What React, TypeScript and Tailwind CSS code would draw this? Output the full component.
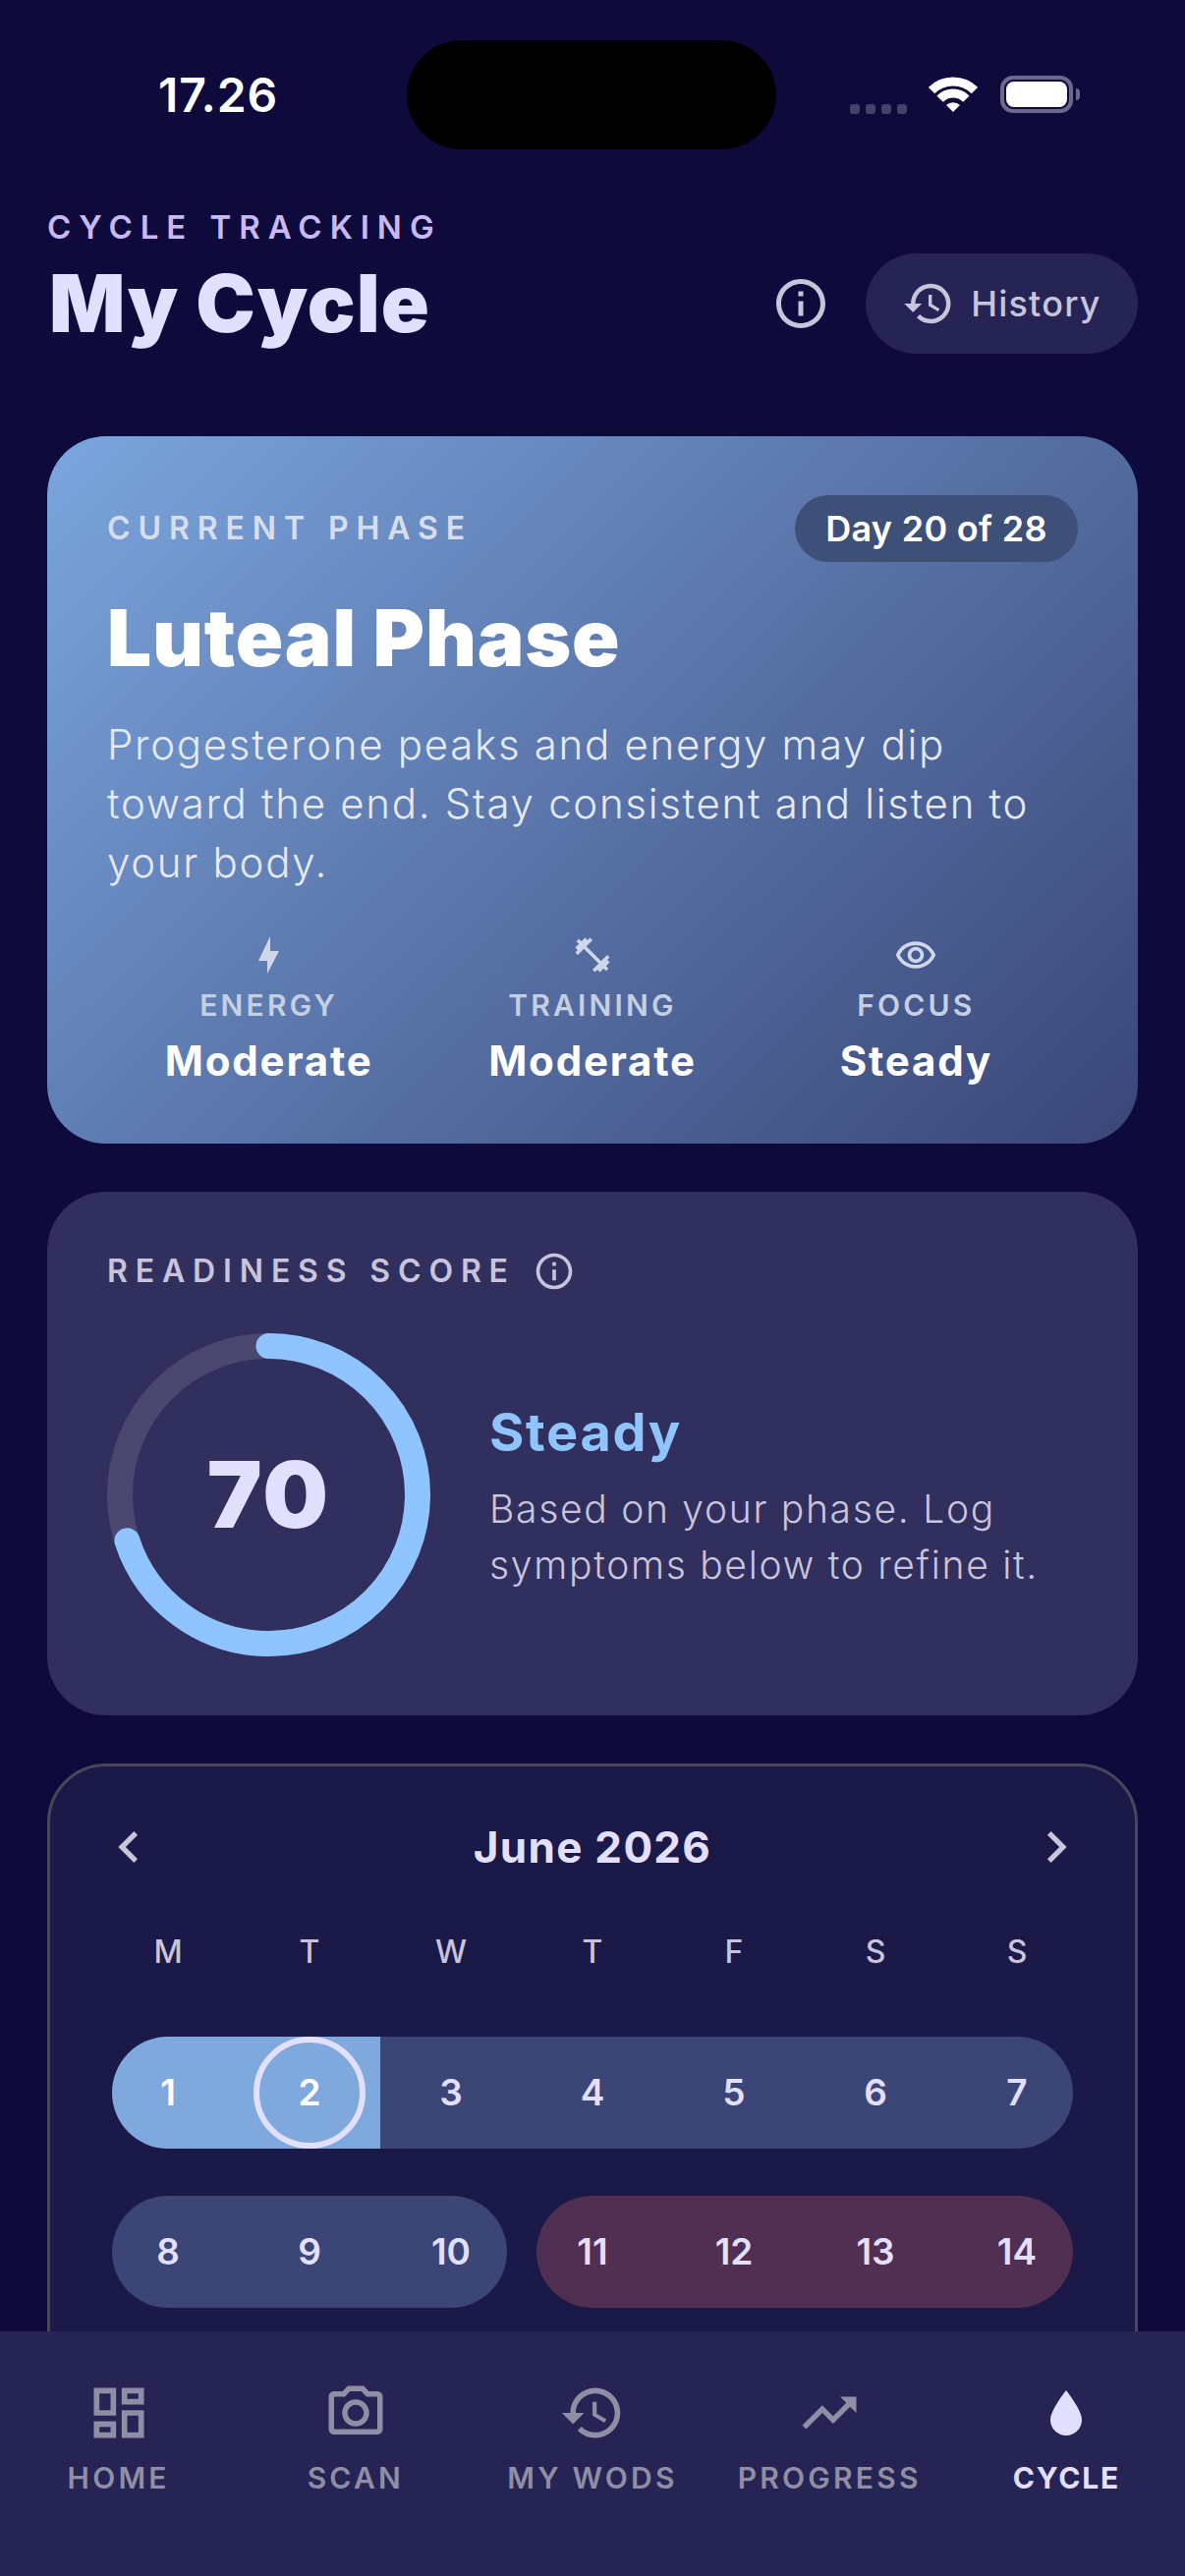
import { FC, ReactNode } from "react";
import {
  MdChevronLeft,
  MdChevronRight,
  MdFitnessCenter,
  MdHistory,
  MdInfoOutline,
  MdOutlineDashboard,
  MdOutlinePhotoCamera,
  MdOutlineRemoveRedEye,
  MdTrendingUp,
} from "react-icons/md";

const BoltIcon = () => (
  <svg width="21" height="38" viewBox="0 0 21 38" fill="currentColor">
    <polygon points="12,0 0,25 9,25 9,38 21,15 12,15" />
  </svg>
);

const DropIcon = () => (
  <svg width="32" height="46" viewBox="0 0 32 46" fill="currentColor">
    <path d="M16 0C16 0 32 20 32 30A16 16 0 0 1 0 30C0 20 16 0 16 0Z" />
  </svg>
);

const WifiIcon = () => (
  <svg width="50" height="36" viewBox="0 0 50 36" fill="none">
    <path d="M3.1 14.1A31 31 0 0 1 46.9 14.1" stroke="white" strokeWidth="9" />
    <path d="M11.6 22.6A19 19 0 0 1 38.4 22.6" stroke="white" strokeWidth="9" />
    <path d="M18 29A10 10 0 0 1 32 29L25 36Z" fill="white" />
  </svg>
);

const StatusBar = () => (
  <div className="flex items-start pt-[41px] h-[152px] shrink-0">
    <div className="w-[414px] pl-[30px] h-[111px] flex items-center justify-center font-semibold text-[48px] text-white tracking-[0.8px]">
      17.26
    </div>
    <div className="w-[376px] h-[111px] rounded-full bg-black"></div>
    <div className="flex-1 flex items-start pl-[75px] pt-[37px]">
      <div className="flex gap-[6px] mt-[28px]">
        <span className="w-[10px] h-[10px] rounded-[3px] bg-[#45436a]"></span>
        <span className="w-[10px] h-[10px] rounded-[3px] bg-[#45436a]"></span>
        <span className="w-[10px] h-[10px] rounded-[3px] bg-[#45436a]"></span>
        <span className="w-[10px] h-[10px] rounded-[3px] bg-[#45436a]"></span>
      </div>
      <div className="ml-[22px]">
        <WifiIcon />
      </div>
      <div className="ml-[23px] w-[74px] h-[38px] rounded-[13px] border-[4px] border-[#6b6990] p-[2px] -mt-[1px]">
        <div className="w-full h-full rounded-[8px] bg-white"></div>
      </div>
      <div className="w-[4px] h-[12px] rounded-r-full bg-[#6b6990] ml-[3px] mt-[12px]"></div>
    </div>
  </div>
);

type StatProps = { icon: ReactNode; label: string; value: string };

const Stat: FC<StatProps> = ({ icon, label, value }) => (
  <div className="flex flex-col items-center">
    <div className="h-[40px] flex items-center justify-center text-[#cfd8ea]">
      {icon}
    </div>
    <div className="mt-[11px] text-[30px] leading-[40px] font-semibold tracking-[3.2px] text-[#c5cfe3]">
      {label}
    </div>
    <div className="mt-[12px] text-[42px] leading-[50px] font-bold text-white tracking-[1.8px]">
      {value}
    </div>
  </div>
);

const PhaseCard = () => (
  <section className="rounded-[60px] bg-linear-135 from-[#7ba6de] to-[#3a4677] px-[61px] pt-[60px] pb-[59px]">
    <div className="flex items-center justify-between h-[68px]">
      <span className="text-[32px] font-semibold tracking-[7.9px] text-[#d6deee]">
        CURRENT PHASE
      </span>
      <span className="h-[68px] w-[288px] rounded-full bg-[#3f5078] flex items-center justify-center text-[36px] font-semibold text-white tracking-[0.3px]">
        Day 20 of 28
      </span>
    </div>
    <h2 className="mt-[32px] text-[80px] leading-[90px] font-black text-white tracking-[0.8px]">
      Luteal Phase
    </h2>
    <p className="mt-[34px] text-[42px] leading-[60px] font-light text-[#e4e9f4] tracking-[1.7px]">
      Progesterone peaks and energy may dip
      <br />
      toward the end. Stay consistent and listen to
      <br />
      your body.
    </p>
    <div className="mt-[44px] grid grid-cols-3">
      <Stat icon={<BoltIcon />} label="ENERGY" value="Moderate" />
      <Stat icon={<MdFitnessCenter size={42} />} label="TRAINING" value="Moderate" />
      <Stat icon={<MdOutlineRemoveRedEye size={44} />} label="FOCUS" value="Steady" />
    </div>
  </section>
);

const ReadinessCard = () => (
  <section className="mt-[49px] rounded-[60px] bg-[#312f5e] px-[61px] pt-[61px] pb-[60px]">
    <div className="flex items-center h-[40px] text-[#c7c4dc]">
      <span className="text-[32px] font-semibold tracking-[7.85px]">
        READINESS SCORE
      </span>
      <MdInfoOutline size={44} className="ml-[17px]" />
    </div>
    <div className="mt-[43px] flex items-center">
      <div className="relative w-[329px] h-[329px] shrink-0">
        <svg width="329" height="329" viewBox="0 0 329 329" fill="none">
          <circle cx="164.5" cy="164.5" r="151.5" stroke="#4a4770" strokeWidth="26" />
          <circle
            cx="164.5"
            cy="164.5"
            r="151.5"
            stroke="#90c4ff"
            strokeWidth="26"
            strokeLinecap="round"
            pathLength={100}
            strokeDasharray="70 100"
            transform="rotate(-90 164.5 164.5)"
          />
        </svg>
        <div className="absolute inset-0 flex items-center justify-center text-[94px] font-black text-[#e2dfff] tracking-[2px]">
          70
        </div>
      </div>
      <div className="ml-[60px]">
        <div className="text-[54px] leading-[70px] font-bold text-[#90c4ff] tracking-[1.7px]">
          Steady
        </div>
        <p className="mt-[14px] text-[39px] leading-[57px] font-light text-[#c7c4dc] tracking-[1.7px]">
          Based on your phase. Log
          <br />
          symptoms below to refine it.
        </p>
      </div>
    </div>
  </section>
);

const WEEKDAYS = ["M", "T", "W", "T", "F", "S", "S"];

const CalendarCard = () => (
  <section className="mt-[49px] rounded-[60px] border-[3px] border-[#47475c] bg-[#1b1947] px-[48px] pt-[50px] pb-[140px]">
    <div className="flex items-center justify-between h-[64px] text-[#c7c4dc]">
      <MdChevronLeft size={64} />
      <span className="text-[44px] font-bold text-[#e2dfff] tracking-[1.3px]">
        June 2026
      </span>
      <MdChevronRight size={64} />
    </div>
    <div className="mt-[55px] grid grid-cols-7 text-center text-[32px] leading-[40px] font-medium text-[#c7c4dc]">
      {WEEKDAYS.map((day, i) => (
        <div key={i}>{day}</div>
      ))}
    </div>
    <div className="mt-[66px] grid grid-cols-7 h-[114px] text-[37px] font-semibold text-[#e2dfff]">
      <div className="ml-[15px] pr-[15px] rounded-l-full bg-[#7fa8dd] text-white flex items-center justify-center">
        1
      </div>
      <div className="bg-[#7fa8dd] text-white flex items-center justify-center">
        <div className="w-[114px] h-[114px] rounded-full border-[6px] border-[#e2dfff] flex items-center justify-center">
          2
        </div>
      </div>
      <div className="bg-[#3b4677] flex items-center justify-center">3</div>
      <div className="bg-[#3b4677] flex items-center justify-center">4</div>
      <div className="bg-[#3b4677] flex items-center justify-center">5</div>
      <div className="bg-[#3b4677] flex items-center justify-center">6</div>
      <div className="mr-[15px] pl-[15px] rounded-r-full bg-[#3b4677] flex items-center justify-center">
        7
      </div>
    </div>
    <div className="mt-[48px] grid grid-cols-7 h-[114px] text-[37px] font-semibold text-[#e2dfff]">
      <div className="ml-[15px] pr-[15px] rounded-l-full bg-[#3b4677] flex items-center justify-center">
        8
      </div>
      <div className="bg-[#3b4677] flex items-center justify-center">9</div>
      <div className="mr-[15px] pl-[15px] rounded-r-full bg-[#3b4677] flex items-center justify-center">
        10
      </div>
      <div className="ml-[15px] pr-[15px] rounded-l-full bg-[#502f53] flex items-center justify-center">
        11
      </div>
      <div className="bg-[#502f53] flex items-center justify-center">12</div>
      <div className="bg-[#502f53] flex items-center justify-center">13</div>
      <div className="mr-[15px] pl-[15px] rounded-r-full bg-[#502f53] flex items-center justify-center">
        14
      </div>
    </div>
  </section>
);

type NavItemProps = { icon: ReactNode; label: string; active?: boolean };

const NavItem: FC<NavItemProps> = ({ icon, label, active }) => (
  <div
    className={`flex flex-col items-center ${
      active ? "text-[#e2dfff]" : "text-[#8f8ea5]"
    }`}
  >
    <div className="h-[66px] flex items-center justify-center">{icon}</div>
    <div
      className={`mt-[13px] text-[30px] leading-[40px] ${
        active ? "font-bold tracking-[1.8px]" : "font-semibold tracking-[3.2px]"
      }`}
    >
      {label}
    </div>
  </div>
);

const BottomNav = () => (
  <nav className="h-[249px] shrink-0 bg-[#252454] grid grid-cols-5 pt-[50px]">
    <NavItem icon={<MdOutlineDashboard size={68} />} label="HOME" />
    <NavItem icon={<MdOutlinePhotoCamera size={66} />} label="SCAN" />
    <NavItem icon={<MdHistory size={68} />} label="MY WODS" />
    <NavItem icon={<MdTrendingUp size={66} />} label="PROGRESS" />
    <NavItem icon={<DropIcon />} label="CYCLE" active />
  </nav>
);

export default function App() {
  return (
    <div className="w-[1206px] h-[2622px] overflow-hidden bg-[#0f0a3c] flex flex-col font-['Inter',sans-serif]">
      <StatusBar />
      <main className="flex-1 min-h-0 overflow-hidden px-[48px] pt-[59px]">
        <div className="text-[33px] leading-[40px] font-semibold tracking-[7.95px] text-[#c8b9f5]">
          CYCLE TRACKING
        </div>
        <div className="mt-[7px] flex items-center h-[102px]">
          <h1 className="flex-1 text-[81px] leading-[102px] font-black text-[#e2dfff] pl-[2px] tracking-[1px]">
            My Cycle
          </h1>
          <MdInfoOutline size={60} className="text-[#c7c4dc]" />
          <div className="ml-[36px] w-[277px] h-[102px] rounded-full bg-[#252454] flex items-center justify-center gap-[16px] text-[#c7c4dc]">
            <MdHistory size={54} />
            <span className="text-[36px] font-medium tracking-[1.2px]">
              History
            </span>
          </div>
        </div>
        <div className="mt-[84px]">
          <PhaseCard />
          <ReadinessCard />
          <CalendarCard />
        </div>
      </main>
      <BottomNav />
    </div>
  );
}
